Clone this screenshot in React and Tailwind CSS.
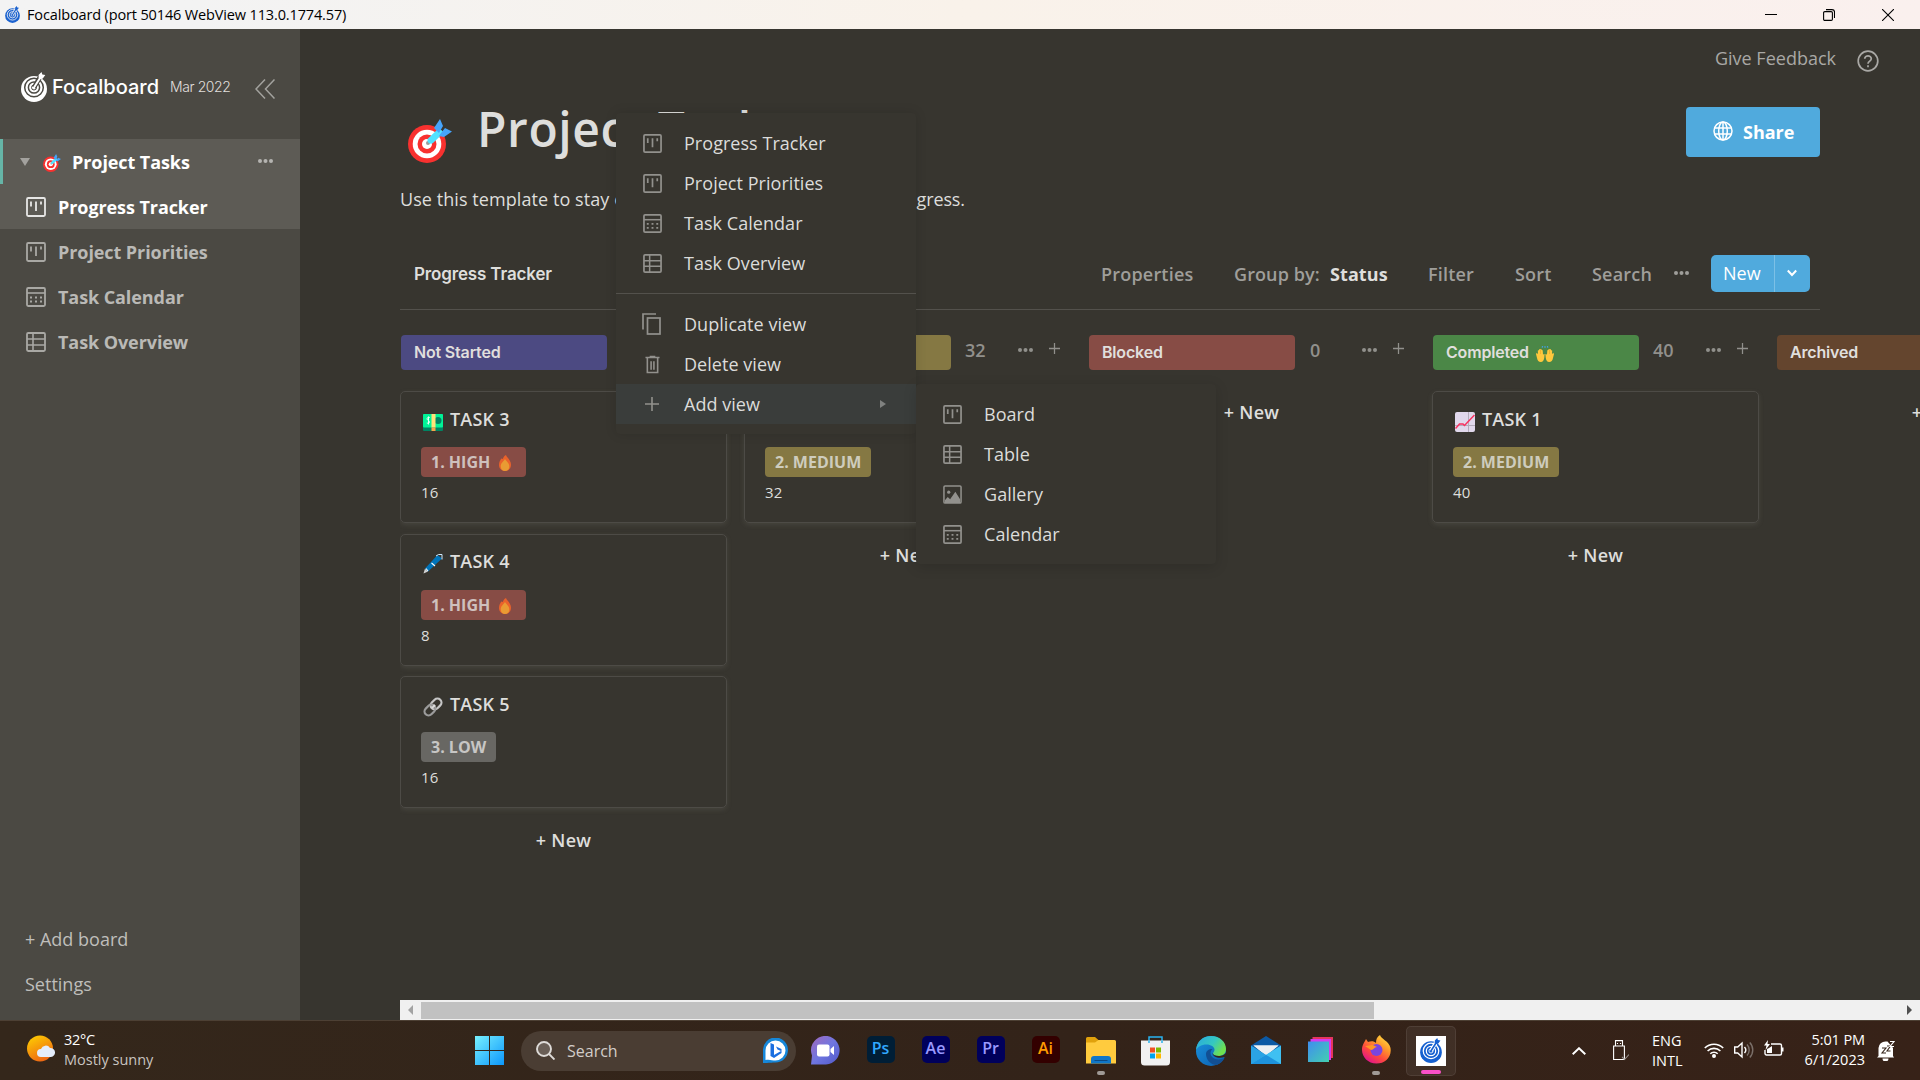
const OPEN = "font-['Open_Sans','Noto_Sans',sans-serif]";

/* ---------- view icons ---------- */
function BoardIcon({ className }) {
  return (
    <svg viewBox="0 0 20 20" className={className} fill="none" stroke="currentColor">
      <rect x="1" y="1" width="18" height="18" rx="1.2" strokeWidth="1.8" />
      <path d="M5 4.5v5M10 4.5v9.5M15 4.5v3" strokeWidth="1.8" />
    </svg>
  );
}
function CalendarIcon({ className }) {
  return (
    <svg viewBox="0 0 20 20" className={className} fill="none" stroke="currentColor">
      <rect x="1" y="1" width="18" height="18" rx="1.2" strokeWidth="1.8" />
      <path d="M1 6h18" strokeWidth="1.6" />
      <path d="M4 10.5h12M4 14.5h12" strokeWidth="1.8" strokeDasharray="2 3" />
    </svg>
  );
}
function TableIcon({ className }) {
  return (
    <svg viewBox="0 0 20 20" className={className} fill="none" stroke="currentColor">
      <rect x="1" y="1" width="18" height="18" rx="1.2" strokeWidth="1.8" />
      <path d="M1 7h18M1 13h18M7 1v18" strokeWidth="1.6" />
    </svg>
  );
}
function GalleryIcon({ className }) {
  return (
    <svg viewBox="0 0 20 20" className={className} fill="none" stroke="currentColor">
      <rect x="1" y="1" width="18" height="18" rx="1.2" strokeWidth="1.6" />
      <circle cx="6" cy="7.5" r="1.7" fill="currentColor" stroke="none" />
      <path d="M2 16l3-3.500 2.500 2.500L13 7l5 8v4H2z" fill="currentColor" stroke="none" />
    </svg>
  );
}
function DuplicateIcon({ className }) {
  return (
    <svg viewBox="0 0 20 22" className={className} fill="none" stroke="currentColor" strokeWidth="1.7">
      <path d="M1 16.500V1h13" />
      <rect x="5.500" y="5" width="12.500" height="16" />
    </svg>
  );
}
function TrashIcon({ className }) {
  return (
    <svg viewBox="0 0 16 20" className={className} fill="none" stroke="currentColor" strokeWidth="1.700">
      <path d="M.5 2.500h15M5 1.500h6M2.500 3v15.500h11V3M6.500 6.500v9M9.500 6.500v9" />
    </svg>
  );
}
function PlusIcon({ className }) {
  return (
    <svg viewBox="0 0 14 14" className={className} stroke="currentColor" strokeWidth="1.600">
      <path d="M7 0v14M0 7h14" />
    </svg>
  );
}
function Dots({ className }) {
  return (
    <svg viewBox="0 0 15 4" className={className} fill="currentColor">
      <circle cx="2" cy="2" r="2" />
      <circle cx="7.500" cy="2" r="2" />
      <circle cx="13" cy="2" r="2" />
    </svg>
  );
}

/* ---------- pictograms ---------- */
function TargetEmoji({ className }) {
  return (
    <svg viewBox="0 0 44 44" className={className}>
      <ellipse cx="19" cy="25" rx="19" ry="19" fill="#f8312f" />
      <circle cx="19" cy="25" r="14.300" fill="#fff" />
      <circle cx="19" cy="25" r="9.500" fill="#f8312f" />
      <circle cx="19" cy="25" r="5" fill="#fff" />
      <circle cx="20" cy="24" r="2" fill="#9b9b9b" />
      <path d="M20 19.500L31 9l5 4.500L25 24c-3 2-7-1-5-4.500z" fill="#50e2ff" />
      <path d="M26 9l6-9 3 7-4 7zM33 14l4-5 7 3.500-8 5.500-5-1z" fill="#46a4fb" />
    </svg>
  );
}
function MoneyEmoji({ className }) {
  return (
    <svg viewBox="0 0 20 20" className={className}>
      <rect x="0" y="2" width="20" height="17" rx="1" fill="#008463" />
      <rect x="0" y="2" width="20" height="13.500" rx="1" fill="#00f397" />
      <circle cx="15" cy="8.500" r="3.500" fill="#008463" />
      <path d="M6.800 5.500c-3-1-3.500 2-1.500 3s1.500 3.500-1.500 2.500M5.500 4.500v8" stroke="#e6fff4" strokeWidth="1" fill="none" />
      <rect x="8.500" y="2" width="4" height="13.500" fill="#ffe27a" />
      <rect x="8.500" y="15.500" width="4" height="3.500" fill="#f9a44a" />
    </svg>
  );
}
function PenEmoji({ className }) {
  return (
    <svg viewBox="0 0 20 20" className={className}>
      <path d="M.5 19.500l1.500-5 3 3z" fill="#d3d3d3" />
      <path d="M2 14.500L14.500 1l4.500 3.500L5 17.500z" fill="#0074ba" />
      <path d="M3 14.500l2 2.500M8.500 9l3.500 3" stroke="#fff" strokeWidth="1.100" />
      <path d="M13 2l2.500-1.500L19 .5v5" stroke="#cdeaff" strokeWidth="1" fill="none" />
    </svg>
  );
}
function LinkEmoji({ className }) {
  return (
    <svg viewBox="0 0 20 20" className={className} fill="none" strokeWidth="2.200">
      <rect x="-1" y="-4" width="12" height="8" rx="4" transform="translate(9.500 10.500) rotate(-45)" stroke="#c6c6c6" />
      <rect x="-11" y="-4" width="12" height="8" rx="4" transform="translate(10.500 9.500) rotate(-45)" stroke="#9b9b9b" />
      <path d="M9 11l3-3" stroke="#dcdcdc" />
    </svg>
  );
}
function ChartEmoji({ className }) {
  return (
    <svg viewBox="0 0 20 20" className={className}>
      <rect width="20" height="20" rx="2" fill="#e1d8ec" />
      <path d="M0 13.500h20M13.500 0v20" stroke="#b4acbc" strokeWidth="1" />
      <path d="M.5 16.500l4-4.500h3.500l1.500 1.500L19.500 3" stroke="#f8315f" strokeWidth="1.500" fill="none" />
    </svg>
  );
}
function FireEmoji({ className }) {
  return (
    <svg viewBox="0 0 12 16" className={className}>
      <path d="M7 0c.3 2.500 5 4.500 5 9.800C12 13.800 9.300 16 6 16s-6-2.200-6-6.200c0-2.800 1.200-4.300 2.200-6.300L3.800 4C4.500 2.500 5 .8 7 0z" fill="#e9622b" />
      <path d="M6 4c1 2 4.300 4 4.300 7.300S8.500 16 6 16s-4.300-1.500-4.300-4.700S5 6 6 4z" fill="#e99b33" />
    </svg>
  );
}
function HandsEmoji({ className }) {
  return (
    <svg viewBox="0 0 18 16" className={className}>
      <path d="M0 8l.8-1.200L2 8.300 1.800 4.500l1-.3L3.500 3l1 .3.700-.3.6 1 .9.300.3 4.200L8.600 8l-.3 3.500C8 14 7 16 4.800 16S1.500 14.500 1 12zM18 8l-.8-1.200L16 8.300l.2-3.800-1-.3-.7-1.200-1 .3-.7-.3-.6 1-.9.300-.3 4.200L9.400 8l.3 3.500C10 14 11 16 13.200 16s3.300-1.500 3.800-4z" fill="#ffc83d" />
      <path d="M4.500 4v4M13.500 4v4" stroke="#e89c1c" strokeWidth=".5" />
      <path d="M6 1.500L6.800.3M9 1.800V.3M12 1.500L11.200.3" stroke="#46a4fb" strokeWidth="1.200" />
    </svg>
  );
}
function FocalLogo({ className }) {
  return (
    <svg viewBox="0 0 26 30" className={className}>
      <circle cx="13" cy="17" r="13" fill="currentColor" />
      <g fill="none" className="stroke-(--ring)">
        <circle cx="13" cy="15.500" r="9.300" strokeWidth="1.500" />
        <circle cx="13" cy="15.500" r="5.600" strokeWidth="1.500" />
        <circle cx="13" cy="15.500" r="2.500" strokeWidth="1" />
        <path d="M13 15.500L18.500 6" strokeWidth="4.500" />
      </g>
      <path d="M13 15.500L19 6" stroke="currentColor" strokeWidth="2" strokeLinecap="round" />
      <path d="M17.500 3l3-3 .8 2.500 3 .5-2.500 3.500-3.500 1z" fill="currentColor" />
    </svg>
  );
}

/* ---------- window ---------- */
function TitleBar() {
  return (
    <header className="flex h-[29px] shrink-0 items-center justify-between bg-linear-to-r from-[#f3f3f3] from-10% via-[#f9f2ea] via-50% to-[#faf0ee] pl-[5px] pr-[26px] text-black">
      <div className="flex items-center gap-[7px]">
        <FocalLogo className="mt-[-1px] h-[17px] w-[15px] text-[#1b62cf] [--ring:#f3f3f3]" />
        <span className={`${OPEN} whitespace-nowrap text-[14.500px] tracking-[-0.14px]`}>
          Focalboard (port 50146 WebView 113.0.1774.57)
        </span>
      </div>
      <div className="flex items-center">
        <svg viewBox="0 0 12 12" className="mr-[46px] h-3 w-3" stroke="black"><path d="M0 5.500h12" /></svg>
        <svg viewBox="0 0 12 12" className="mr-[47px] h-3 w-3" fill="none" stroke="black" strokeWidth="1.100">
          <rect x=".6" y="2.600" width="8.800" height="8.800" rx="1.200" />
          <path d="M3 .6h6a2.500 2.500 0 0 1 2.500 2.500V9" />
        </svg>
        <svg viewBox="0 0 12 12" className="h-3 w-3" stroke="black" strokeWidth="1.100"><path d="M0 0l12 12M12 0L0 12" /></svg>
      </div>
    </header>
  );
}

function SideView({ icon: Icon, label, active }) {
  return (
    <div className={`flex h-[45px] items-center pl-[26px] ${active ? "bg-[#5d5b55] text-white" : "text-[#bab9b6]"}`}>
      <Icon className="mr-[12px] h-5 w-5 opacity-85" />
      <span className="pt-[2px] text-[18px] font-bold tracking-[-0.08px]">{label}</span>
    </div>
  );
}

function Sidebar() {
  return (
    <aside className="flex w-[300px] shrink-0 flex-col bg-[#4b4943]">
      <div className="flex h-[110px] items-center pl-[21px] pt-[4px] text-white">
        <FocalLogo className="mt-[2px] h-[30px] w-[26px] [--ring:#4b4943]" />
        <span className="ml-[5px] w-[118px] whitespace-nowrap pt-px font-[Inter,sans-serif] text-[20px] font-medium">Focalboard</span>
        <span className="w-[85px] whitespace-nowrap pt-px font-[Inter,sans-serif] text-[14px] font-light tracking-[-0.4px] text-[#e0dfdd]">Mar 2022</span>
        <svg viewBox="0 0 20 20" className="mt-[5px] h-5 w-5" fill="none" stroke="#a3a29e" strokeWidth="1.500">
          <path d="M10 .5L1 10l9 9.500M19.500 .5l-9 9.500 9 9.500" />
        </svg>
      </div>
      <div className="flex h-[45px] items-center border-l-[3px] border-[#66b5a7] bg-[#5d5b55] pl-[17px] text-white">
        <svg viewBox="0 0 10 8" className="h-2 w-[10px]" fill="#a3a29e"><path d="M0 0h10L5 8z" /></svg>
        <TargetEmoji className="ml-[13px] mt-[2px] h-[18px] w-[18px]" />
        <span className="ml-[11px] w-[186px] pt-[2px] text-[18px] font-bold tracking-[-0.08px]">Project Tasks</span>
        <Dots className="mb-[2px] h-1 w-[15px] text-[#b5b4b1]" />
      </div>
      <SideView icon={BoardIcon} label="Progress Tracker" active />
      <SideView icon={BoardIcon} label="Project Priorities" />
      <SideView icon={CalendarIcon} label="Task Calendar" />
      <SideView icon={TableIcon} label="Task Overview" />
      <div className="mt-auto flex h-[103px] flex-col pl-[25px] text-[18px] text-[#bfbebb]">
        <span className="flex h-[45px] items-center">+ Add board</span>
        <span className="flex h-[45px] items-center">Settings</span>
      </div>
    </aside>
  );
}

/* ---------- board ---------- */
function Tag({ kind }) {
  const kinds = {
    high: { label: "1. HIGH", color: "bg-[#874c45] text-[#cfc0bd]", width: "w-[105px]" },
    medium: { label: "2. MEDIUM", color: "bg-[#857843] text-[#ceccbd]", width: "w-[106px]" },
    low: { label: "3. LOW", color: "bg-[#686763] text-[#c7c6c4]", width: "w-[75px]" },
  };
  const k = kinds[kind];
  return (
    <div className={`flex h-[30px] items-center gap-[9px] whitespace-nowrap rounded-[4px] pl-[10px] text-[16px] font-bold ${k.color} ${k.width}`}>
      {k.label}
      {kind === "high" && <FireEmoji className="mt-[2px] h-4 w-3" />}
    </div>
  );
}

function Card({ icon: Icon, title, kind, value }) {
  return (
    <div className="mb-[10.500px] h-[132px] w-[327px] rounded-[5px] border border-[#4d4b46] pl-5 pt-[13px] shadow-[0_2px_5px_rgba(140,138,130,0.18)]">
      <div className="flex h-7 items-center pl-[2px]">
        <Icon className="mt-[5px] h-5 w-5" />
        <span className="ml-[7px] text-[18px] font-semibold tracking-[0.2px]">{title}</span>
      </div>
      <div className="mt-[14px]">
        <Tag kind={kind} />
      </div>
      <div className="mt-[4px] text-[15px] leading-[22px] tracking-[0.2px]">{value}</div>
    </div>
  );
}

function Column({ name, color, count, children, hands }) {
  return (
    <section className="w-[344px] shrink-0">
      <div className="flex h-[35px] items-center pl-px text-[#91908c]">
        <div className={`flex h-[35px] w-[206px] items-center rounded-[4px] pb-px pl-[13px] font-[Inter,sans-serif] text-[16px] font-semibold tracking-[-0.18px] text-[#e0dfdd] ${color}`}>
          {name}
          {hands && <HandsEmoji className="ml-[7px] mt-[4px] h-4 w-[18px]" />}
        </div>
        <span className={`mb-[5px] w-[53px] text-[18px] font-semibold leading-8 ${count === "0" ? "ml-[15px] mr-[-1px]" : "ml-[14px]"}`}>{count}</span>
        <Dots className="mb-[6px] h-1 w-[15px]" />
        <PlusIcon className="mb-[8px] ml-[16px] h-[11px] w-[11px]" />
      </div>
      <div className="mt-[21px]">
        {children}
        <div className="flex h-[43px] w-[327px] items-center justify-center text-[18px] font-semibold tracking-[0.25px]">+ New</div>
      </div>
    </section>
  );
}

function MenuItem({ icon: Icon, label, size = "h-[19px] w-[19px]", active }) {
  return (
    <div className={`flex h-10 items-center pl-6 pr-[30px] ${active ? "bg-[#3a3d3b]" : ""}`}>
      <span className="flex w-6 items-center justify-center text-[#92918d]">
        <Icon className={size} />
      </span>
      <span className="ml-5 flex-1 text-[18px] tracking-[0.04px]">{label}</span>
      {active && (
        <svg viewBox="0 0 6 8" className="h-2 w-[6px]" fill="#7f817f"><path d="M0 0l6 4-6 4z" /></svg>
      )}
    </div>
  );
}

function ViewMenu() {
  return (
    <div className="absolute left-[316px] top-[84px] w-[300px] rounded-[4px] bg-[#37352f] py-[10px] text-[#dcdcda] shadow-[0_0_12px_rgba(0,0,0,0.12)]">
      <MenuItem icon={BoardIcon} label="Progress Tracker" />
      <MenuItem icon={BoardIcon} label="Project Priorities" />
      <MenuItem icon={CalendarIcon} label="Task Calendar" />
      <MenuItem icon={TableIcon} label="Task Overview" />
      <div className="my-[10px] h-px bg-[#53514c]" />
      <MenuItem icon={DuplicateIcon} label="Duplicate view" size="h-[22px] w-5" />
      <MenuItem icon={TrashIcon} label="Delete view" size="h-[19px] w-[15px]" />
      <MenuItem icon={PlusIcon} label="Add view" size="h-[14px] w-[14px]" active />
      <div className="absolute left-[300px] top-[271px] w-[300px] rounded-[4px] bg-[#37352f] py-[10px] shadow-[0_3px_14px_rgba(0,0,0,0.14)]">
        <MenuItem icon={BoardIcon} label="Board" />
        <MenuItem icon={TableIcon} label="Table" />
        <MenuItem icon={GalleryIcon} label="Gallery" />
        <MenuItem icon={CalendarIcon} label="Calendar" />
      </div>
    </div>
  );
}

function Main() {
  return (
    <main className="relative flex min-w-0 flex-1 flex-col overflow-hidden bg-[#37352f] pl-[100px] text-[#dededc]">
      <div className="flex h-[60px] shrink-0 items-center justify-end gap-[21px] pr-[41px] text-[#a9a8a5]">
        <span className="pb-px text-[18px]">Give Feedback</span>
        <svg viewBox="0 0 22 22" className="mt-[3px] h-[22px] w-[22px]" fill="none" stroke="currentColor" strokeWidth="1.700">
          <circle cx="11" cy="11" r="9.800" />
          <path d="M7.700 8.800c0-4 6.600-4 6.600 0 0 2.200-3.300 2.400-3.300 4.900" />
          <path d="M11 15.300v2" />
        </svg>
      </div>
      <div className="flex h-[89px] w-[1420px] shrink-0 items-start justify-between">
        <div className="flex items-start">
          <TargetEmoji className="ml-2 mt-[30px] h-[44px] w-[44px]" />
          <h1 className="ml-[25px] mt-[8px] whitespace-nowrap text-[48px] font-semibold leading-[64px] tracking-[0.6px]">Project Tasks</h1>
        </div>
        <button className="mt-[18px] flex h-[50px] w-[134px] items-center rounded-[4px] bg-[#50aadd] pl-[27px] text-[18px] font-bold text-white">
          <svg viewBox="0 0 20 20" className="mb-[3px] mr-[10px] h-5 w-5" fill="none" stroke="currentColor" strokeWidth="1.500">
            <circle cx="10" cy="10" r="9" />
            <ellipse cx="10" cy="10" rx="4.300" ry="9" />
            <path d="M10 1v18M1.700 7h16.600M1.700 13h16.600" />
          </svg>
          Share
        </button>
      </div>
      <p className="flex h-[42px] shrink-0 items-center whitespace-nowrap text-[18px]">
        <span className="tracking-[0.07px]">Use this template to stay&nbsp;</span>
        <span className="tracking-[-0.12px]">organized and track your project progress.</span>
      </p>
      <div className="flex h-[90px] w-[1420px] shrink-0 items-center border-b border-[#53514c] pl-[14px] pt-[19px] text-[18px] font-semibold tracking-[0.2px] text-[#9f9e9a]">
        <span className="w-[687px] pt-[2px] font-[Inter,sans-serif] text-[17px] font-semibold tracking-[-0.15px] text-[#dededc]">Progress Tracker</span>
        <span className="w-[133px]">Properties</span>
        <span className="w-[96px] tracking-[0.1px]">Group by:</span>
        <span className="w-[98px] font-bold tracking-[0.08px] text-[#dededc]">Status</span>
        <span className="w-[87px]">Filter</span>
        <span className="w-[77px]">Sort</span>
        <span className="w-[82px]">Search</span>
        <Dots className="mb-[3px] h-1 w-[15px]" />
        <div className="mb-[2px] ml-[22px] flex h-[37px] w-[99px] items-center rounded-[5px] bg-[#50aadd] font-normal tracking-normal text-white">
          <span className="flex h-full w-[64px] items-center border-r border-[#7cc0e6] pl-[12px] pt-px">New</span>
          <svg viewBox="0 0 10 8" className="ml-[12px] h-2 w-[10px]" fill="none" stroke="currentColor" strokeWidth="2"><path d="M.8 1.500L5 6l4.200-4.500" /></svg>
        </div>
      </div>
      <div className="mt-[25px] flex flex-1 overflow-hidden">
        <Column name="Not Started" color="bg-[#4c4a82]" count="40">
          <Card icon={MoneyEmoji} title="TASK 3" kind="high" value="16" />
          <Card icon={PenEmoji} title="TASK 4" kind="high" value="8" />
          <Card icon={LinkEmoji} title="TASK 5" kind="low" value="16" />
        </Column>
        <Column name="In Progress" color="bg-[#857843]" count="32">
          <Card icon={PenEmoji} title="TASK 2" kind="medium" value="32" />
        </Column>
        <Column name="Blocked" color="bg-[#874c45]" count="0" />
        <Column name="Completed" color="bg-[#4b8747]" count="40" hands>
          <Card icon={ChartEmoji} title="TASK 1" kind="medium" value="40" />
        </Column>
        <Column name="Archived" color="bg-[#64452e]" count="0" />
      </div>
      <div className="flex h-5 shrink-0 items-center bg-[#f0f0f0] pr-[8px]">
        <svg viewBox="0 0 5 10" className="ml-2 h-[10px] w-[5px]" fill="#a3a3a3"><path d="M5 0v10L0 5z" /></svg>
        <div className="ml-2 h-[17px] w-[953px] bg-[#c1c1c1]" />
        <svg viewBox="0 0 5 10" className="ml-auto h-[10px] w-[5px]" fill="#505050"><path d="M0 0v10l5-5z" /></svg>
      </div>
      <ViewMenu />
    </main>
  );
}

/* ---------- taskbar ---------- */
function TaskApp({ children, mark, tile }) {
  return (
    <div className={`relative flex h-[50px] w-[50px] items-center justify-center rounded-[5px] ${tile ? "border border-white/8 bg-white/6" : ""}`}>
      {children}
      {mark && <span className={`absolute bottom-[1px] h-1 rounded-full ${tile ? "w-5 bg-[#fa50c8]" : "w-2 bg-[#a09a96]"}`} />}
    </div>
  );
}

function Adobe({ label, color }) {
  return (
    <TaskApp>
      <span className={`mb-[3px] mr-px flex h-[27px] w-7 items-center justify-center rounded-[5px] pb-[2px] text-[16px] font-semibold ${color}`}>{label}</span>
    </TaskApp>
  );
}

function Taskbar() {
  return (
    <footer className="flex h-[60px] shrink-0 border-t border-[#4d4034] bg-linear-to-r from-[#34271b] via-[#332319] via-55% to-[#372218] text-[15px] leading-[20px] text-white">
      <div className="flex w-[464px] items-center pl-[27px]">
        <svg viewBox="0 0 28 28" className="mb-[3px] h-7 w-7">
          <defs>
            <linearGradient id="sun" x1="0" y1="0" x2=".5" y2="1"><stop stopColor="#ffd400" /><stop offset="1" stopColor="#ee6a13" /></linearGradient>
          </defs>
          <circle cx="13" cy="13.500" r="13" fill="url(#sun)" />
          <path d="M14 22a4 4 0 0 1 0-8 5 5 0 0 1 9-1 4.500 4.500 0 0 1 1 9z" fill="#e4edfb" />
        </svg>
        <div className="mb-[2px] ml-[9px] flex flex-col whitespace-nowrap">
          <span className="text-[14.500px] tracking-[-0.3px]">32°C</span>
          <span className="text-[14.500px] text-[#c9c4c0]">Mostly sunny</span>
        </div>
      </div>
      <div className="flex items-center">
        <TaskApp>
          <svg viewBox="0 0 29 29" className="h-[29px] w-[29px]">
            <defs>
              <linearGradient id="win" x1="0" y1="0" x2="1" y2="1"><stop stopColor="#77f0fe" /><stop offset="1" stopColor="#0c97fc" /></linearGradient>
            </defs>
            <path d="M0 0h14v14H0zM15 0h14v14H15zM0 15h14v14H0zM15 15h14v14H15z" fill="url(#win)" />
          </svg>
        </TaskApp>
        <div className="ml-[7px] flex h-10 w-[275px] items-center rounded-full bg-[#4a3d33] pl-[15px] pr-2">
          <svg viewBox="0 0 19 19" className="h-[19px] w-[19px]" fill="none" stroke="#dedbd8" strokeWidth="1.900">
            <circle cx="8" cy="8" r="7" fill="#6a5f57" />
            <path d="M13 13l5.500 5.500" />
          </svg>
          <span className="ml-3 flex-1 text-[16px] text-[#d2cdc9]">Search</span>
          <svg viewBox="0 0 25 25" className="h-[25px] w-[25px]">
            <path d="M0 25V12.500A12.500 12.500 0 1 1 12.500 24.500C9 24.500 6 25 0 25z" fill="#1687d9" />
            <path d="M2.500 22V12.500a10 10 0 1 1 10 10c-3.500 0-6-1.500-10-.5z" fill="#fff" />
            <path d="M7.500 5l3.500 1.500V17l7-4-3.500-1.500L13 8.500l5.500 2.500v4L11 20l-3.500-2z" fill="#1b6fe0" />
          </svg>
        </div>
        <div className="ml-[5px] flex gap-[5px]">
          <TaskApp>
            <svg viewBox="0 0 29 29" className="mb-px mr-px h-[29px] w-[29px]">
              <defs>
                <linearGradient id="chat" x1="0" y1="0" x2="1" y2="1"><stop stopColor="#a268bd" /><stop offset=".5" stopColor="#6f76e0" /><stop offset="1" stopColor="#5158c8" /></linearGradient>
              </defs>
              <path d="M0 28.500l1-9A14.300 14.300 0 1 1 15 28.500z" fill="url(#chat)" />
              <rect x="6" y="8.500" width="12.500" height="12" rx="2" fill="#fff" />
              <path d="M19.500 13l3.500-3v9l-3.500-3z" fill="#fff" />
            </svg>
          </TaskApp>
          <Adobe label="Ps" color="bg-[#001e36] text-[#31a8ff]" />
          <Adobe label="Ae" color="bg-[#00005b] text-[#9999ff]" />
          <Adobe label="Pr" color="bg-[#00005b] text-[#9999ff]" />
          <Adobe label="Ai" color="bg-[#330000] text-[#ff9a00]" />
          <TaskApp mark>
            <svg viewBox="0 0 30 27" className="h-[27px] w-[30px]">
              <path d="M0 1.500Q0 0 1.500 0H9l4 3.500H28L30 6H0z" fill="#e0a10c" />
              <path d="M0 5.500L9 5.500 12.500 3H28.500Q30 3 30 4.500V26.500H0z" fill="#ffcb3e" />
              <path d="M5 26.500V22q0-3 3-3H22q3 0 3 3v4.500z" fill="#0f76c8" />
              <path d="M8.500 23.500h13" stroke="#0a4a85" />
            </svg>
          </TaskApp>
          <TaskApp>
            <svg viewBox="0 0 29 30" className="mr-px h-[30px] w-[29px]">
              <path d="M8 6V1h13v5" fill="none" stroke="#28b3f0" strokeWidth="1.500" />
              <path d="M0 4.500H29V26q0 3.500-3.500 3.500h-22Q0 29.500 0 26z" fill="#f1f1f1" />
              <path d="M9 11.500h5v5H9z" fill="#f25022" /><path d="M15 11.500h5v5h-5z" fill="#7fba00" />
              <path d="M9 17.500h5v5H9z" fill="#00a4ef" /><path d="M15 17.500h5v5h-5z" fill="#ffb900" />
              <path d="M8 7V4.500M21 7V4.500" stroke="#28b3f0" strokeWidth="1.500" />
            </svg>
          </TaskApp>
          <TaskApp>
            <svg viewBox="0 0 30 30" className="h-[30px] w-[30px]">
              <defs>
                <linearGradient id="edgeTop" x1="0" y1="0" x2="1" y2=".5"><stop stopColor="#2aa7e0" /><stop offset=".6" stopColor="#35c8c0" /><stop offset="1" stopColor="#6fe04f" /></linearGradient>
                <linearGradient id="edgeLow" x1="0" y1="0" x2="1" y2="1"><stop stopColor="#1a94df" /><stop offset="1" stopColor="#0b5cad" /></linearGradient>
              </defs>
              <circle cx="15" cy="15" r="15" fill="url(#edgeLow)" />
              <path d="M0 14C1 5 7 0 15 0c9 0 15 6 15 13 0 5-4 7-7 7-4 0-6-1-6-2.500 0-1 1.500-1.500 1.500-4C18.500 11 15 8.500 10.500 8.500 5 8.500 1.500 11 0 14z" fill="url(#edgeTop)" />
              <path d="M10 18c0 5 4 11 11 11 4-2 6-4 7.500-7-6 3-14 1-14-5 0-2 1-3 2-4-4 0-6.500 2-6.500 5z" fill="#124f93" />
              <path d="M16.500 17.500c0 3 6 5.500 12 3.500l1.500 3V17c-2 2-4 3-7 3-4 0-6-1-6-2.500z" fill="#35241a" />
            </svg>
          </TaskApp>
          <TaskApp>
            <svg viewBox="0 0 30 28" className="mb-[2px] h-7 w-[30px]">
              <path d="M0 9.500L15 0l15 9.500-4 6H4z" fill="#0c59a4" />
              <path d="M2.500 9.500h25L15 20z" fill="#eef0f2" />
              <path d="M0 9.500L30 28H0z" fill="#2ba3e4" /><path d="M30 9.500L30 28H0z" fill="#3fc0f2" />
              <path d="M2.500 9.500h25L15 18.500z" fill="#eef0f2" />
              <path d="M15 18.800L30 28H0z" fill="#1e93dd" />
            </svg>
          </TaskApp>
          <TaskApp>
            <svg viewBox="0 0 25 25" className="mb-[3px] mr-px h-[25px] w-[25px]">
              <defs>
                <linearGradient id="sheet" x1="0" y1="0" x2="1" y2="1"><stop stopColor="#3f8df0" /><stop offset="1" stopColor="#43d0b0" /></linearGradient>
              </defs>
              <path d="M4.500 0H25v21H4.500z" fill="#e5355e" />
              <path d="M2.500 2H23v21H2.500z" fill="#d23df0" />
              <path d="M0 4.500H21V25H0z" fill="url(#sheet)" />
            </svg>
          </TaskApp>
          <TaskApp mark>
            <svg viewBox="0 0 29 29" className="mb-[2px] h-[29px] w-[29px]">
              <defs>
                <linearGradient id="fox" x1="1" y1="0" x2=".3" y2="1"><stop stopColor="#fff24a" /><stop offset=".4" stopColor="#ff9a2b" /><stop offset=".7" stopColor="#ff4a3d" /><stop offset="1" stopColor="#e0158a" /></linearGradient>
              </defs>
              <path d="M0 15C0 10 2 8 4 4l2 3c3-1 6-1 8 1 0-4 1-6 4-8 1 4 9 6 10.500 13C30 22 23 28.500 14.500 28.500S0 22 0 15z" fill="url(#fox)" />
              <circle cx="14.500" cy="15" r="6" fill="#7a45e0" />
              <path d="M3 11c4 0 7-2 10 0l2 1c-3 0-3 3-6 3z" fill="#ff9626" />
            </svg>
          </TaskApp>
          <TaskApp mark tile>
            <span className="flex h-[30px] w-[30px] items-center justify-center bg-white">
              <FocalLogo className="h-[25px] w-[22px] text-[#1560d0] [--ring:#ffffff]" />
            </span>
          </TaskApp>
        </div>
      </div>
      <div className="ml-auto flex items-center pr-[25px]">
        <svg viewBox="0 0 14 8" className="mr-[27px] h-2 w-[14px]" fill="none" stroke="white" strokeWidth="1.900"><path d="M.7 7.300L7 1.200l6.300 6.100" /></svg>
        <svg viewBox="0 0 16 21" className="mr-[23px] h-[21px] w-4" fill="none" stroke="white" strokeWidth="1.100">
          <path d="M2.500 6V.6h7V6M.6 6h10.800v13.500H.6zM4.500 3v1M7.500 3v1" />
          <path d="M9 17l2.500 2.500L16 14.500" stroke="#9a938f" />
        </svg>
        <div className="flex w-[52px] flex-col text-[14.500px]"><span>ENG</span><span>INTL</span></div>
        <svg viewBox="0 0 20 16" className="mb-px mr-[10px] h-4 w-5" fill="none" stroke="white" strokeWidth="1.600">
          <path d="M.8 6a13 13 0 0 1 18.400 0M3.600 9a9 9 0 0 1 12.800 0M6.300 11.800a5.200 5.200 0 0 1 7.400 0" />
          <circle cx="10" cy="14" r="1.200" fill="white" />
        </svg>
        <svg viewBox="0 0 20 18" className="mb-px mr-[10px] h-[18px] w-5" fill="none" stroke="white" strokeWidth="1.400">
          <path d="M.7 6h3L8 2v14l-4.300-4h-3zM10.500 6a4.500 4.500 0 0 1 0 6" />
          <path d="M13 3.500a8 8 0 0 1 0 11M15.800 1.500a11 11 0 0 1 0 15" stroke="#7b706a" />
        </svg>
        <svg viewBox="0 0 20 18" className="mb-[3px] mr-[19px] h-[18px] w-5" fill="none" stroke="white" strokeWidth="1.400">
          <path d="M7 4h9a1.500 1.500 0 0 1 1.500 1.500v8A1.500 1.500 0 0 1 16 15H2.500A1.500 1.500 0 0 1 1 13.500V10M18.800 7.500v4" />
          <path d="M3 13V9l2-1 3-2v7z" fill="white" stroke="none" /><path d="M4 0L0 5.500h2.500L1.500 10 6 4H3.500z" fill="white" stroke="none" />
        </svg>
        <div className="mb-[2px] flex w-[62px] flex-col items-end whitespace-nowrap text-[14.500px]"><span className="tracking-[-0.1px]">5:01 PM</span><span>6/1/2023</span></div>
        <svg viewBox="0 0 18 21" className="mb-px ml-[12px] h-[21px] w-[18px]">
          <path d="M1.500 16V8A7 7 0 0 1 8.500 1.500h2L16 8v8l1 1.500H0zM5.500 18.500h6a3 3 0 0 1-6 0z" fill="white" />
          <path d="M5 8h4l-4 5h4M10 6h3.500L10 11h3.500" stroke="#35241a" strokeWidth="1.100" fill="none" />
          <path d="M13 1.500h4L13 6.500h4" stroke="white" strokeWidth="1.200" fill="none" />
        </svg>
      </div>
    </footer>
  );
}

export default function App() {
  return (
    <div className={`${OPEN} flex h-[1080px] w-[1920px] flex-col overflow-hidden bg-[#37352f]`}>
      <TitleBar />
      <div className="flex h-[991px] shrink-0">
        <Sidebar />
        <Main />
      </div>
      <Taskbar />
    </div>
  );
}
